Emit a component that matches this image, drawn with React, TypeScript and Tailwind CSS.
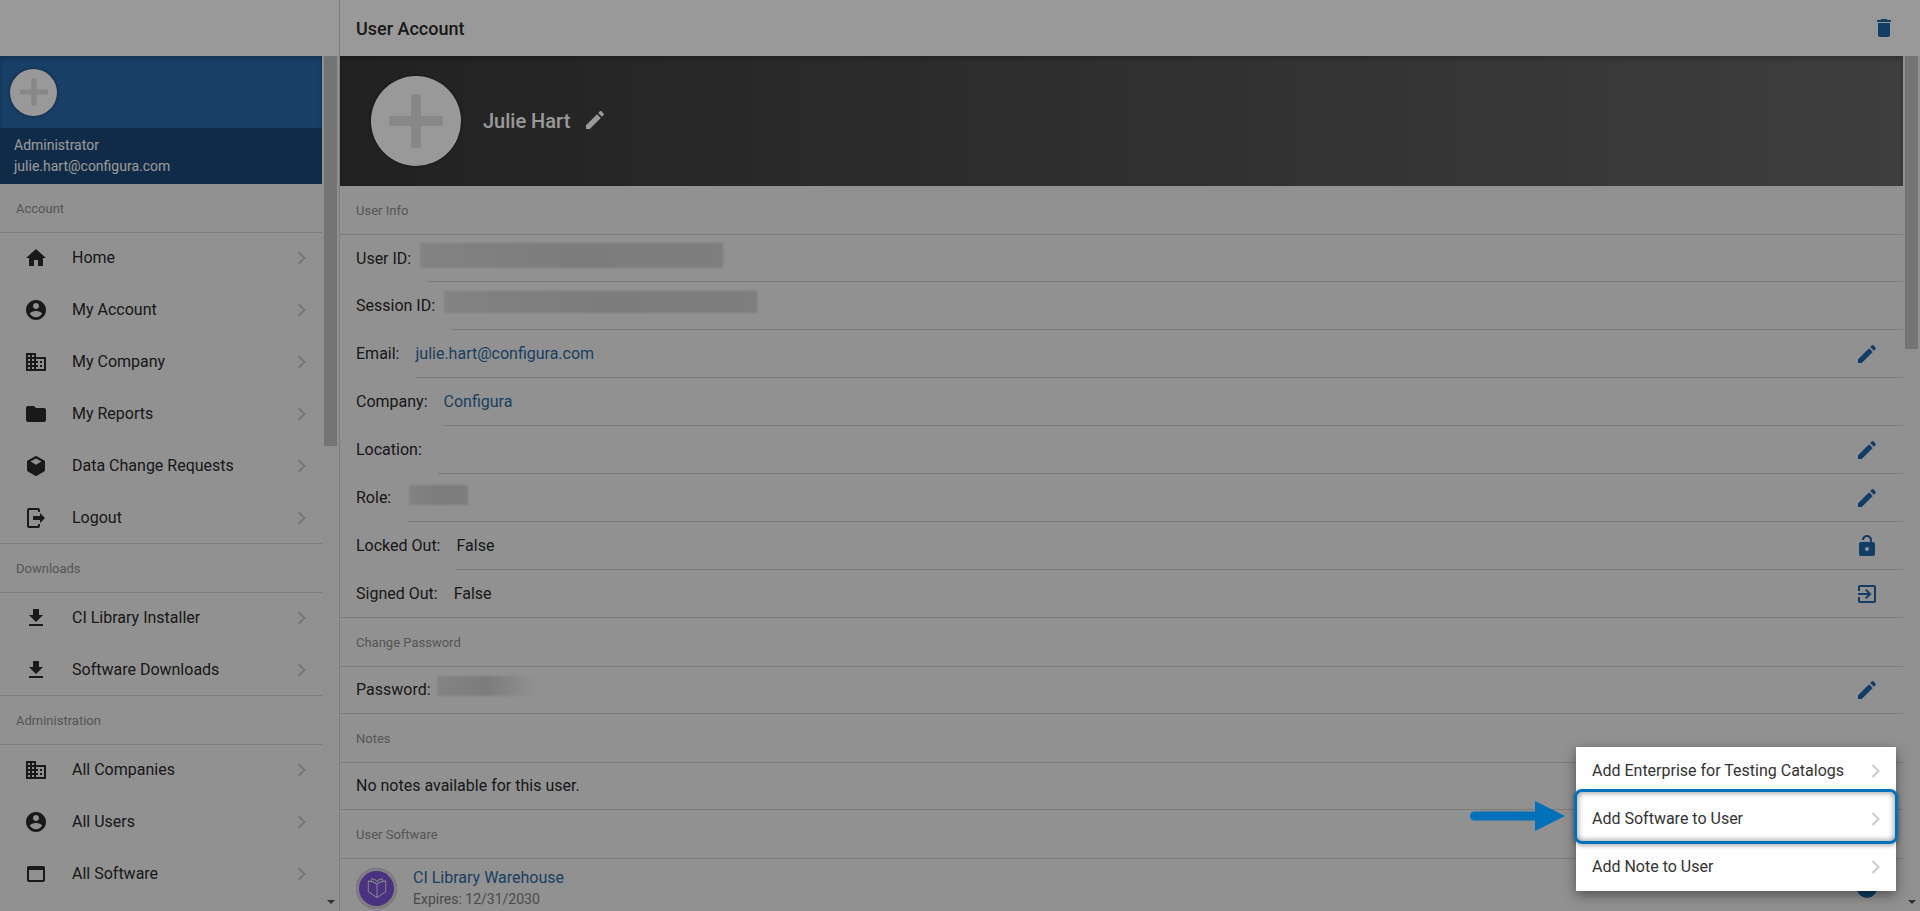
import React from "react";

const P = {
  home: "M10 20v-6h4v6h5v-8h3L12 3 2 12h3v8z",
  account: "M12 2C6.48 2 2 6.48 2 12s4.48 10 10 10 10-4.48 10-10S17.52 2 12 2zm0 3c1.66 0 3 1.34 3 3s-1.34 3-3 3-3-1.34-3-3 1.34-3 3-3zm0 14.2c-2.5 0-4.71-1.28-6-3.22.03-1.99 4-3.08 6-3.08 1.99 0 5.97 1.09 6 3.08-1.29 1.94-3.5 3.22-6 3.22z",
  business: "M12 7V3H2v18h20V7H12zM6 19H4v-2h2v2zm0-4H4v-2h2v2zm0-4H4V9h2v2zm0-4H4V5h2v2zm4 12H8v-2h2v2zm0-4H8v-2h2v2zm0-4H8V9h2v2zm0-4H8V5h2v2zm10 12h-8v-2h2v-2h-2v-2h2v-2h-2V9h8v10zm-2-8h-2v2h2v-2zm0 4h-2v2h2v-2z",
  folder: "M10 4H4c-1.1 0-1.99.9-1.99 2L2 18c0 1.1.9 2 2 2h16c1.1 0 2-.9 2-2V8c0-1.1-.9-2-2-2h-8l-2-2z",
  cube: "M11.200 2.300a1.600 1.600 0 0 1 1.600 0l7.400 4.200c.5.3.8.8.8 1.400v8.200c0 .6-.3 1.100-.8 1.400l-7.400 4.200a1.600 1.600 0 0 1-1.600 0l-7.400-4.200c-.5-.3-.8-.8-.8-1.400V7.900c0-.6.3-1.100.8-1.400zM12 4.500L6.500 7.600 12 10.700l5.500-3.100z",
  logout: "M16 17v-3H9v-4h7V7l5 5-5 5M14 2a2 2 0 0 1 2 2v2h-2V4H5v16h9v-2h2v2a2 2 0 0 1-2 2H5a2 2 0 0 1-2-2V4a2 2 0 0 1 2-2h9z",
  download: "M19 9h-4V3H9v6H5l7 7 7-7zM5 18v2h14v-2H5z",
  web: "M19 4H5c-1.110 0-2 .9-2 2v12c0 1.100.89 2 2 2h14c1.100 0 2-.9 2-2V6c0-1.100-.89-2-2-2zm0 14H5V8h14v10z",
  edit: "M3 17.250V21h3.750L17.810 9.940l-3.750-3.750L3 17.250zM20.710 7.040c.39-.39.39-1.020 0-1.410l-2.340-2.340c-.39-.39-1.020-.39-1.410 0l-1.830 1.830 3.750 3.750 1.830-1.830z",
  trash: "M6 19c0 1.100.9 2 2 2h8c1.100 0 2-.9 2-2V7H6v12zM19 4h-3.500l-1-1h-5l-1 1H5v2h14V4z",
  lock: "M12 17c1.100 0 2-.9 2-2s-.9-2-2-2-2 .9-2 2 .9 2 2 2zm6-9h-1V6c0-2.760-2.240-5-5-5S7 3.240 7 6h1.900c0-1.710 1.390-3.100 3.100-3.100 1.710 0 3.100 1.390 3.100 3.100v2H6c-1.100 0-2 .9-2 2v10c0 1.100.9 2 2 2h12c1.100 0 2-.9 2-2V10c0-1.100-.9-2-2-2z",
  exit: "M10.090 15.590L11.500 17l5-5-5-5-1.410 1.410L12.670 11H3v2h9.670l-2.580 2.590zM19 3H5c-1.110 0-2 .9-2 2v4h2V5h14v14H5v-4H3v4c0 1.100.89 2 2 2h14c1.100 0 2-.9 2-2V5c0-1.100-.9-2-2-2z",
};

function Icon({ d, className }: { d: string; className: string }) {
  return (
    <svg viewBox="0 0 24 24" className={className} fill="currentColor" fillRule="evenodd">
      <path d={d} />
    </svg>
  );
}

function Chevron({ className }: { className: string }) {
  return (
    <svg viewBox="0 0 8 14" className={className} fill="none" stroke="currentColor" strokeWidth="1.800">
      <path d="M1 1l6 6-6 6" />
    </svg>
  );
}

function Plus({ className }: { className: string }) {
  return (
    <svg viewBox="0 0 54 54" className={className} fill="currentColor">
      <rect x="22" y="0" width="10" height="54" rx="2" />
      <rect x="0" y="22" width="54" height="10" rx="2" />
    </svg>
  );
}

function NavLabel({ text }: { text: string }) {
  return (
    <div className="h-[49px] -mb-px pt-[2px] border-b border-[#d0d0d0] flex items-center pl-4 text-[13px] text-[#8f8f8f]">{text}</div>
  );
}

function NavRow({ icon, text, line = true }: { icon: string; text: string; line?: boolean }) {
  return (
    <div className={"h-[52px] flex items-center pl-6 pr-4 border-[#d0d0d0] text-[#2a2a2a] " + (line ? "last:border-b" : "")}>
      <Icon d={icon} className="w-6 h-6 mr-6 shrink-0" />
      <span className="flex-1 text-base">{text}</span>
      <Chevron className="w-[9px] h-[14px] text-[#c4c4c4]" />
    </div>
  );
}

function SectionLabel({ text }: { text: string }) {
  return (
    <div className="h-[49px] pt-[2px] border-b border-[#d0d0d0] flex items-center pl-4 text-[13px] text-[#8f8f8f]">{text}</div>
  );
}

function Blur({ className }: { className: string }) {
  return <div className={"absolute blur-[1px] " + className} />;
}

function Row({
  label,
  value,
  link,
  icon,
  blur,
  last,
  h,
}: {
  label: string;
  value?: string;
  link?: boolean;
  icon?: string;
  blur?: string;
  last?: boolean;
  h?: string;
}) {
  return (
    <div className={(h ?? "h-[48px]") + " flex pl-4 text-base text-[#2a2a2a] " + (last ? "border-b border-[#d0d0d0]" : "")}>
      <span className="self-center whitespace-nowrap">{label}</span>
      <div className={"relative flex-1 ml-4 flex items-center pr-6 " + (last ? "" : "border-b border-[#d0d0d0]")}>
        {blur && <Blur className={blur} />}
        <span className={"flex-1 " + (link ? "text-[#30699f]" : "")}>{value}</span>
        {icon && <Icon d={icon} className="w-6 h-6 text-[#1f66a8]" />}
      </div>
    </div>
  );
}

const blurFill = "bg-gradient-to-r from-[#dadada] via-[#cfcfcf] to-[#d2d2d2] ";

export default function App() {
  return (
    <div className="relative w-screen h-[911px] overflow-hidden flex bg-[#f2f2f2] font-['Roboto',sans-serif]">
      {/* Sidebar */}
      <aside className="w-[340px] h-full flex flex-col border-r border-[#d0d0d0] shrink-0">
        <div className="h-[56px] bg-white shrink-0" />
        <div className="flex flex-1 min-h-0">
          <div className="w-[322px] shrink-0 overflow-hidden">
            <div className="h-[72px] bg-[#2869aa] flex items-center pl-[10px] shadow-[inset_0_3px_4px_rgba(0,0,0,0.2)]">
              <div className="w-[47px] h-[47px] rounded-full bg-white flex items-center justify-center shadow-[0_0_3px_rgba(0,0,0,0.5)]">
                <Plus className="w-7 h-7 text-[#e2e2e2]" />
              </div>
            </div>
            <div className="h-[56px] bg-[#1c4978] pl-[14px] text-sm text-white flex flex-col justify-center leading-[21px]">
              <div>Administrator</div>
              <div>julie.hart@configura.com</div>
            </div>
            <NavLabel text="Account" />
            <div>
              <NavRow icon={P.home} text="Home" />
              <NavRow icon={P.account} text="My Account" />
              <NavRow icon={P.business} text="My Company" />
              <NavRow icon={P.folder} text="My Reports" />
              <NavRow icon={P.cube} text="Data Change Requests" />
              <NavRow icon={P.logout} text="Logout" />
            </div>
            <NavLabel text="Downloads" />
            <div>
              <NavRow icon={P.download} text="CI Library Installer" />
              <NavRow icon={P.download} text="Software Downloads" />
            </div>
            <NavLabel text="Administration" />
            <div>
              <NavRow icon={P.business} text="All Companies" />
              <NavRow icon={P.account} text="All Users" />
              <NavRow icon={P.web} text="All Software" line={false} />
            </div>
          </div>
          <div className="w-[17px] shrink-0 bg-[#f1f1f1] flex flex-col justify-between items-center">
            <div className="w-[13px] h-[390px] bg-[#c1c1c1]" />
            <div className="mb-[7px] border-x-[4px] border-t-[4px] border-x-transparent border-t-[#505050]" />
          </div>
        </div>
      </aside>

      {/* Main */}
      <main className="flex-1 min-w-0 h-full flex flex-col">
        <header className="h-[56px] shrink-0 bg-white flex items-center justify-between pl-4 pr-6">
          <h1 className="text-lg font-medium text-[#2a2a2a] pt-px">User Account</h1>
          <Icon d={P.trash} className="w-6 h-6 text-[#1f66a8]" />
        </header>
        <div className="flex flex-1 min-h-0">
          <div className="flex-1 min-w-0 overflow-hidden">
            <div className="h-[130px] bg-gradient-to-r from-[#383838] to-[#686868] flex items-center pl-[31px] shadow-[inset_0_3px_4px_rgba(0,0,0,0.2)]">
              <div className="w-[90px] h-[90px] rounded-full bg-white flex items-center justify-center shadow-[0_0_3px_rgba(0,0,0,0.6)]">
                <Plus className="w-[54px] h-[54px] text-[#e2e2e2]" />
              </div>
              <span className="ml-[22px] text-xl font-medium text-white">Julie Hart</span>
              <Icon d={P.edit} className="w-6 h-6 ml-[13px] mb-[3px] text-white" />
            </div>
            <SectionLabel text="User Info" />
            <Row h="h-[47px]" label="User ID:" blur={blurFill + "-left-[7px] top-[8px] w-[303px] h-[25px]"} />
            <Row label="Session ID:" blur={blurFill + "-left-[7px] top-[9px] w-[313px] h-[22px]"} />
            <Row label="Email:" value="julie.hart@configura.com" link icon={P.edit} />
            <Row label="Company:" value="Configura" link />
            <Row label="Location:" icon={P.edit} />
            <Row label="Role:" icon={P.edit} blur={blurFill + "left-[2px] top-[11px] w-[59px] h-[20px]"} />
            <Row label="Locked Out:" value="False" icon={P.lock} />
            <Row label="Signed Out:" value="False" icon={P.exit} last />
            <SectionLabel text="Change Password" />
            <div className="relative">
              <Row h="h-[47px]" label="Password:" icon={P.edit} last />
              <Blur className="left-[97px] top-[9px] w-[98px] h-[20px] bg-gradient-to-r from-[#dcdcdc] via-[#cecece] to-[#f2f2f2]" />
            </div>
            <SectionLabel text="Notes" />
            <div className="h-[47px] border-b border-[#d0d0d0] flex items-center pl-4 text-base text-[#2a2a2a]">
              No notes available for this user.
            </div>
            <SectionLabel text="User Software" />
            <div className="h-[58px] flex items-center pl-4 pr-6">
              <div className="w-[41px] h-[41px] rounded-full bg-[#7a54d8] ring-[3px] ring-inset ring-[#d4d4d4] flex items-center justify-center shrink-0">
                <svg viewBox="0 0 24 24" className="w-[22px] h-[22px] text-[#dcdcdc]" fill="none" stroke="currentColor" strokeWidth="1.100" strokeLinejoin="round">
                  <path d="M12 8C9.500 5.500 6 4.500 2.500 4.500V16L12 22.500L21.500 16V4.500C18 4.500 14.500 5.500 12 8ZM12 8V22.500M6 4.500V2C9 2 11 3.500 12 5C13 3.500 15 2 18 2V4.500" />
                </svg>
              </div>
              <div className="ml-4 flex-1">
                <div className="text-base leading-[22px] text-[#30699f]">CI Library Warehouse</div>
                <div className="text-sm leading-[20px] text-[#7c7c7c]">Expires: 12/31/2030</div>
              </div>
              <div className="w-5 h-5 rounded-full bg-[#1f66a8] mr-[2px]" />
            </div>
          </div>
          <div className="w-[17px] shrink-0 bg-[#f1f1f1] flex flex-col justify-between items-center">
            <div className="w-[13px] h-[293px] bg-[#c1c1c1]" />
            <div className="mb-[7px] border-x-[4px] border-t-[4px] border-x-transparent border-t-[#505050]" />
          </div>
        </div>
      </main>

      {/* Dim overlay */}
      <div className="absolute inset-0 bg-black/40" />

      {/* Action menu */}
      <div className="absolute left-[1576px] top-[747px] w-[320px] bg-white shadow-[0_4px_12px_rgba(0,0,0,0.45)] text-base text-[#333333]">
        <div className="h-[48px] flex items-center pl-4 pr-4 justify-between">
          <span>Add Enterprise for Testing Catalogs</span>
          <Chevron className="w-[9px] h-[14px] text-[#c9c9c9]" />
        </div>
        <div className="relative h-[48px] flex items-center pl-4 pr-4 justify-between">
          <span>Add Software to User</span>
          <Chevron className="w-[9px] h-[14px] text-[#c9c9c9]" />
          <div className="absolute -left-[2px] -right-[2px] -top-[6px] -bottom-[1px] border-[3px] border-[#0271ba] rounded-[8px] shadow-[inset_0_0_6px_rgba(0,0,0,0.5),0_2px_4px_rgba(0,0,0,0.3)]" />
        </div>
        <div className="h-[48px] flex items-center pl-4 pr-4 justify-between">
          <span>Add Note to User</span>
          <Chevron className="w-[9px] h-[14px] text-[#c9c9c9]" />
        </div>
      </div>

      {/* Pointer arrow */}
      <svg viewBox="0 0 95 30" className="absolute left-[1470px] top-[801px] w-[95px] h-[30px] text-[#0271ba]" fill="currentColor">
        <rect x="0" y="10.500" width="70" height="9" rx="4.500" />
        <path d="M65 0L95 15L65 30z" />
      </svg>
    </div>
  );
}
